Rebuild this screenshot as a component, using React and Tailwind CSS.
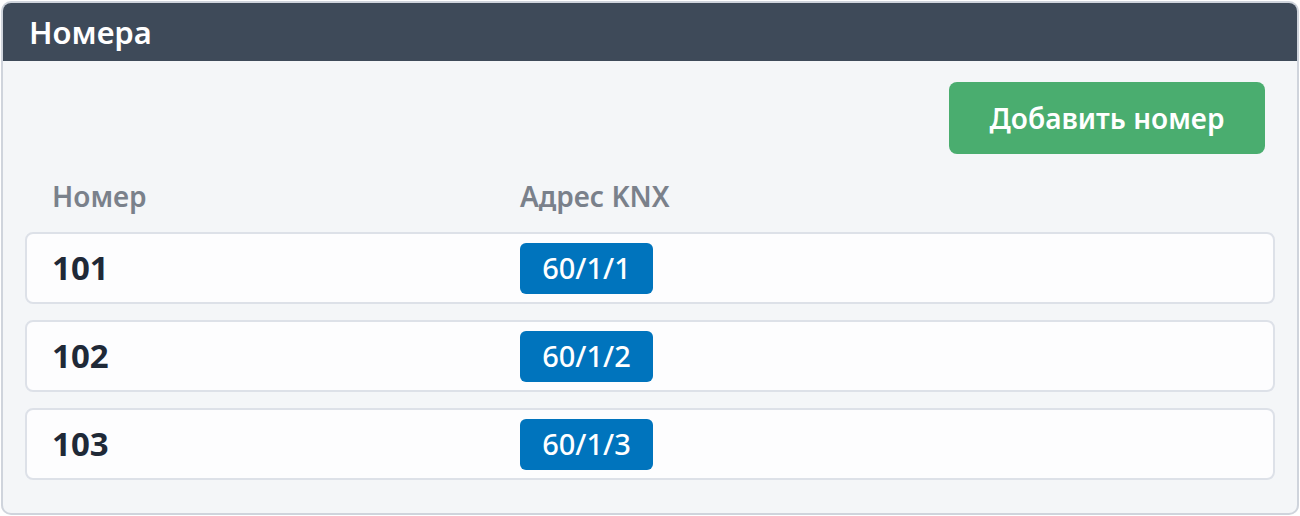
import React from 'react';

const rooms = [
  { number: '101', address: '60/1/1' },
  { number: '102', address: '60/1/2' },
  { number: '103', address: '60/1/3' },
];

const RoomRow = ({ number, address }) => (
  <div className="flex items-center h-[72px] rounded-lg border-2 border-[#dde1e8] bg-[#fdfdfe] px-[25px]">
    <div className="w-[468px] text-[33px] font-bold text-[#1f2937]">{number}</div>
    <span className="inline-flex items-center justify-center h-[51px] w-[133px] rounded-md bg-[#0074bd] text-[29px] font-medium text-white">
      {address}
    </span>
  </div>
);

export default function App() {
  return (
    <div className="w-[1300px] h-[516px] bg-white p-px" style={{ fontFamily: '"Noto Sans", "Open Sans", sans-serif' }}>
      <div className="h-[514px] rounded-[10px] border-2 border-[#cfd4dc] bg-[#f4f6f8] overflow-hidden flex flex-col">
        <div className="h-[58px] shrink-0 bg-[#3e4a59] flex items-center px-[26px]">
          <h2 className="text-[31px] font-semibold text-white leading-none">Номера</h2>
        </div>

        <div className="flex-1 px-[22px] pt-[21px]">
          <div className="flex justify-end pr-[10px]">
            <button className="h-[72px] w-[316px] rounded-lg bg-[#4aad6f] text-[28px] font-semibold text-white">
              Добавить номер
            </button>
          </div>

          <div className="flex items-center h-[78px] pt-[6px] px-[27px] text-[28px] font-semibold text-[#7a818b]">
            <div className="w-[468px]">Номер</div>
            <div>Адрес KNX</div>
          </div>

          <div className="flex flex-col gap-4">
            {rooms.map((room) => (
              <RoomRow key={room.number} {...room} />
            ))}
          </div>
        </div>
      </div>
    </div>
  );
}
